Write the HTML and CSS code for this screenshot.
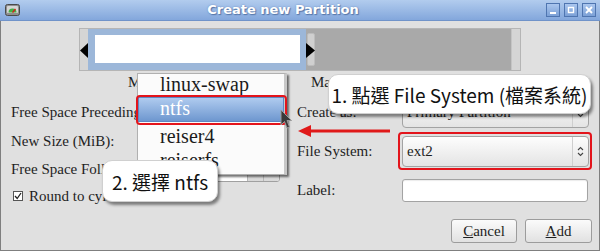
FILE: index.html
```html
<!DOCTYPE html>
<html>
<head>
<meta charset="utf-8">
<link rel="stylesheet" href="styles.css">
</head>
<body>
<div class="window">
  <div class="titlebar">
    <svg class="app-icon" width="15" height="14" viewBox="0 0 15 14">
      <rect x="0.5" y="1.5" width="14" height="11" rx="2" fill="#8e8e8e" stroke="#4a4a4a"/>
      <rect x="2" y="3" width="11" height="7" rx="1" fill="#d6d6d6"/>
      <path d="M3.5 9.5 A4 4 0 0 1 11.5 9.5 Z" fill="#43b047"/>
      <path d="M7.5 9.5 L10.5 6" stroke="#d62020" stroke-width="1.3"/>
    </svg>
    <div class="title">Create new Partition</div>
    <div class="controls">
      <span class="wbtn"><svg width="8" height="8" viewBox="0 0 8 8"><rect x="1" y="6" width="6" height="2" fill="#fff"/></svg></span>
      <span class="wbtn"><svg width="8" height="8" viewBox="0 0 8 8"><rect x="1.5" y="1.5" width="5" height="5" fill="none" stroke="#fff" stroke-width="1.4"/></svg></span>
      <span class="wbtn"><svg width="8" height="8" viewBox="0 0 8 8"><path d="M1 1 L7 7 M7 1 L1 7" stroke="#fff" stroke-width="1.8"/></svg></span>
    </div>
  </div>
  <div class="body">
    <div class="partbar">
      <div class="pb-edge pb-left">
        <svg class="tri-left" width="8" height="15" viewBox="0 0 8 15"><polygon points="0,7.5 8,0 8,15" fill="#000"/></svg>
      </div>
      <div class="pb-used"><div class="pb-inner"></div></div>
      <div class="pb-handle">
        <div class="pb-grip"></div>
        <svg class="tri-right" width="9" height="15" viewBox="0 0 9 15"><polygon points="0,0 9,7.5 0,15" fill="#000"/></svg>
      </div>
      <div class="pb-free"></div>
      <div class="pb-edge pb-right"></div>
    </div>
    <div class="sizes">
      <span class="min">Minimum size: 8 MiB</span>
      <span class="max">Maximum size: 20480 MiB</span>
    </div>
    <div class="columns">
      <div class="left-col">
        <div class="lrow r1"><span class="lbl">Free Space Preceding (MiB):</span><div class="spin"><span class="val">0</span><span class="sbtn">−</span><span class="sbtn">+</span></div></div>
        <div class="lrow"><span class="lbl">New Size (MiB):</span><div class="spin"><span class="val">20480</span><span class="sbtn">−</span><span class="sbtn">+</span></div></div>
        <div class="lrow"><span class="lbl">Free Space Following (MiB):</span><div class="spin"><span class="val">0</span><span class="sbtn">−</span><span class="sbtn">+</span></div></div>
        <div class="lrow check"><span class="cb"><svg width="8" height="8" viewBox="0 0 8 8"><path d="M1 4 L3.2 6.5 L7 1" fill="none" stroke="#222" stroke-width="1.3"/></svg></span><span>Round to cylinders</span></div>
      </div>
      <div class="right-col">
        <div class="frow f1"><span class="flbl">Create as:</span><div class="combo"><span class="ctext">Primary Partition</span><span class="carrow"><svg width="7" height="11" viewBox="0 0 7 11"><path d="M1 4 L3.5 1.5 L6 4 M1 7 L3.5 9.5 L6 7" fill="none" stroke="#444" stroke-width="1.1"/></svg></span></div></div>
        <div class="frow f2"><span class="flbl">File System:</span><div class="combo"><span class="ctext">ext2</span><span class="carrow"><svg width="7" height="11" viewBox="0 0 7 11"><path d="M1 4 L3.5 1.5 L6 4 M1 7 L3.5 9.5 L6 7" fill="none" stroke="#444" stroke-width="1.1"/></svg></span></div></div>
        <div class="frow f3"><span class="flbl">Label:</span><div class="entry"></div></div>
        <div class="buttons">
          <button class="btn b-cancel"><u>C</u>ancel</button>
          <button class="btn b-add"><u>A</u>dd</button>
        </div>
      </div>
    </div>
  </div>

  <div class="popup">
    <div class="item i1">linux-swap</div>
    <div class="item sel">ntfs</div>
    <div class="item i3">reiser4</div>
    <div class="item i4">reiserfs</div>
  </div>
  <div class="mark mark-ntfs"></div>
  <div class="mark mark-fs"></div>
  <svg class="cursor" width="12" height="21" viewBox="0 0 12 21"><polygon points="1,1 1,16 4.5,12.5 7,19 9.5,18 7,11.5 11.5,11.5" fill="#3a3a3a" stroke="#9a9a9a" stroke-width="1"/></svg>
  <svg class="arrow" width="96" height="16" viewBox="0 0 96 16"><line x1="12" y1="8" x2="94" y2="8" stroke="#e01a1a" stroke-width="3"/><polygon points="2,8 15,2 15,14" fill="#e01a1a"/></svg>
  <div class="callout c1">1. 點選 File System (檔案系統)</div>
  <div class="callout c2">2. 選擇 ntfs</div>
</div>
</body>
</html>
```

FILE: styles.css
```css
* { box-sizing: border-box; }
html, body { margin: 0; padding: 0; }
body {
  font-family: "Liberation Serif", serif;
  font-size: 15px;
  color: #1e1e1e;
  background: #ffffff;
}
.window {
  position: relative;
  width: 600px;
  height: 251px;
  overflow: hidden;
  background: #e0e0e0;
  white-space: nowrap;
}

/* title bar */
.titlebar {
  height: 21px;
  display: flex;
  align-items: center;
  padding: 0 4px 0 5px;
  background: linear-gradient(#b2ccee, #83a7dc);
  border-bottom: 1px solid #7093c9;
}
.app-icon { display: block; }
.title {
  flex: 1;
  text-align: center;
  font-family: "DejaVu Sans", sans-serif;
  font-weight: bold;
  font-size: 13px;
  line-height: 16px;
  color: #ffffff;
  text-shadow: 1px 1px 1px #5676a8, 0 0 2px #6c8cc0;
}
.controls { display: flex; gap: 4px; }
.wbtn {
  width: 14px;
  height: 14px;
  border: 1px solid #4f75b0;
  background: linear-gradient(#aac6ee, #7ba0d6);
  display: flex;
  align-items: center;
  justify-content: center;
}
.wbtn svg { display: block; }

/* body */
.body {
  height: 230px;
  border: 1px solid #7f7f7f;
  border-top: none;
  padding: 7px 10px 0 10px;
}

/* partition bar */
.partbar {
  width: 442px;
  height: 43px;
  margin: 0 auto;
  display: flex;
  border: 1px solid #b5b5b5;
  background: #d5d5d5;
}
.pb-edge { position: relative; }
.pb-left { width: 8px; }
.pb-right { width: 9px; border-left: 1px solid #c4c4c4; }
.tri-left { position: absolute; left: 0; top: 14px; display: block; }
.pb-used {
  width: 218px;
  background: #9cb7d9;
  padding: 6px 6px 7px 7px;
}
.pb-inner { height: 100%; background: #ffffff; }
.pb-handle {
  position: relative;
  width: 9px;
  background: #a9a9a9;
  padding: 4px 0 4px 1px;
}
.pb-grip {
  height: 100%;
  border: 1px solid #bdbdbd;
  border-radius: 2px;
  background: #cfcfcf;
}
.tri-right { position: absolute; left: 0; top: 14px; display: block; }
.pb-free { flex: 1; background: #a9a9a9; }

/* sizes row */
.sizes {
  margin-top: 3px;
  height: 17px;
  line-height: 17px;
  padding-left: 117px;
  display: flex;
}
.min { width: 183px; }

/* columns */
.columns { display: flex; margin-top: 6px; }
.left-col { width: 286px; padding-top: 1px; }
.lrow { display: flex; align-items: center; height: 28px; line-height: 17px; }
.lrow.r1 { height: 29px; }
.lrow .lbl { width: 185px; }
.spin {
  width: 84px;
  height: 25px;
  display: flex;
  border: 1px solid #a0a0a0;
  border-radius: 3px;
  background: #ffffff;
  overflow: hidden;
}
.spin .val { flex: 1; padding: 3px 4px; }
.spin .sbtn {
  width: 16px;
  text-align: center;
  line-height: 23px;
  border-left: 1px solid #b8b8b8;
  background: linear-gradient(#f4f4f4, #d9d9d9);
  color: #444;
}
.lrow.check { height: 26px; }
.cb {
  width: 10px;
  height: 10px;
  margin: 0 6px 0 2px;
  border: 1px solid #555;
  background: #fff;
  display: flex;
  align-items: center;
  justify-content: center;
}
.cb svg { display: block; }

.right-col { flex: 1; }
.frow { display: flex; align-items: center; line-height: 17px; }
.f1, .f2 { height: 31px; }
.f2 { margin-top: 8px; }
.f3 { height: 23px; margin-top: 12px; }
.flbl { width: 105px; }
.combo {
  width: 187px;
  height: 100%;
  display: flex;
  align-items: center;
  border: 1px solid #a3a3a3;
  border-radius: 4px;
  background: linear-gradient(#fdfdfd, #e4e4e4);
}
.ctext { flex: 1; padding-left: 4px; }
.carrow {
  width: 16px;
  height: 100%;
  border-left: 1px solid #cfcfcf;
  display: flex;
  align-items: center;
  justify-content: center;
}
.carrow svg { display: block; }
.entry {
  width: 186px;
  height: 100%;
  border: 1px solid #a3a3a3;
  border-radius: 3px;
  background: #ffffff;
  box-shadow: inset 0 1px 1px rgba(0,0,0,0.08);
}
.buttons {
  display: flex;
  justify-content: flex-end;
  gap: 8px;
  margin-top: 17px;
  margin-right: -3px;
}
.btn {
  height: 24px;
  padding: 0;
  font-family: "Liberation Serif", serif;
  font-size: 15px;
  color: #1e1e1e;
  border: 1px solid #9c9c9c;
  border-radius: 3px;
  background: linear-gradient(#fbfbfb, #e1e1e1);
}
.b-cancel { width: 66px; }
.b-add { width: 67px; }

/* popup menu */
.popup {
  position: absolute;
  left: 137px;
  top: 73px;
  width: 150px;
  height: 102px;
  background: #fbfbfb;
  border: 1px solid #b0b0b0;
  border-right: 3px solid #c8c8c8;
  box-shadow: 2px 2px 2px rgba(0,0,0,0.55);
  font-size: 20px;
}
.item { height: 25px; padding: 0 0 0 22px; color: #1b1b1b; }
.item.i1 { height: 23px; line-height: 20px; }
.item.i3 { line-height: 28px; }
.item.i4 { height: 24px; line-height: 24px; padding-top: 1px; }
.item.sel {
  color: #ffffff;
  background: linear-gradient(#afcbef, #6e97cf);
  border: 1px solid #5f87c2;
  padding-left: 21px;
  line-height: 21px;
}

.mark {
  position: absolute;
  border: 2px solid #e3141b;
  border-radius: 4px;
}
.mark-ntfs { left: 136px; top: 95px; width: 151px; height: 30px; }
.mark-fs { left: 398px; top: 132px; width: 194px; height: 38px; }

.cursor { position: absolute; left: 280px; top: 109px; display: block; }
.arrow { position: absolute; left: 296px; top: 123px; display: block; }

/* callouts */
.callout {
  position: absolute;
  background: #ffffff;
  border: 1px solid #d0d0d0;
  border-radius: 10px;
  box-shadow: 2px 3px 3px rgba(0,0,0,0.45);
  font-family: "Noto Sans CJK TC", "Noto Sans", sans-serif;
  color: #111111;
  display: flex;
  align-items: center;
  justify-content: center;
}
.c1 { left: 328px; top: 74px; width: 263px; height: 40px; font-size: 19px; }
.c2 { left: 102px; top: 160px; width: 116px; height: 42px; font-size: 19px; }
```
